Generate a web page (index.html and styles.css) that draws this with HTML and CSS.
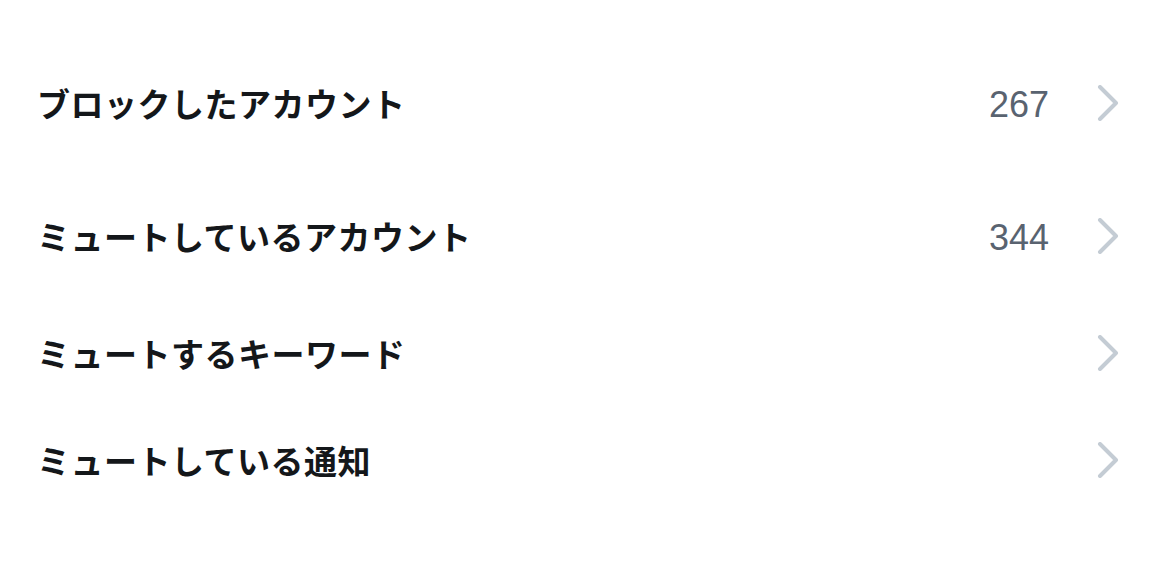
FILE: index.html
```html
<!DOCTYPE html>
<html lang="ja">
<head>
    <meta charset="UTF-8">
    <meta name="viewport" content="width=device-width, initial-scale=1.0">
    <title>ミュートとブロック</title>
    <link rel="stylesheet" href="styles.css">
</head>
<body>
    <ul class="settings">
        <li class="row row-blocked">
            <span class="label">ブロックしたアカウント</span>
            <span class="count">267</span>
            <svg class="chevron" viewBox="0 0 22 36"><polyline points="3,2 19,18 3,34"/></svg>
        </li>
        <li class="row row-muted">
            <span class="label">ミュートしているアカウント</span>
            <span class="count">344</span>
            <svg class="chevron" viewBox="0 0 22 36"><polyline points="3,2 19,18 3,34"/></svg>
        </li>
        <li class="row row-words">
            <span class="label">ミュートするキーワード</span>
            <svg class="chevron" viewBox="0 0 22 36"><polyline points="3,2 19,18 3,34"/></svg>
        </li>
        <li class="row">
            <span class="label">ミュートしている通知</span>
            <svg class="chevron" viewBox="0 0 22 36"><polyline points="3,2 19,18 3,34"/></svg>
        </li>
    </ul>
</body>
</html>
```

FILE: styles.css
```css
body {
    margin: 0;
    background-color: #fff;
    font-family: "Noto Sans CJK JP", "Noto Sans", sans-serif;
    color: #14171a;
}
.settings {
    list-style: none;
    margin: 0;
    padding: 73px 50px 0 37px;
}
.row {
    display: flex;
    align-items: center;
    height: 60px;
}
.row-blocked {
    margin-bottom: 73px;
}
.row-muted {
    margin-bottom: 57px;
}
.row-words {
    margin-bottom: 47px;
}
.label {
    flex: 1;
    font-size: 33px;
    font-weight: 700;
    letter-spacing: 0.5px;
}
.count {
    font-family: "Liberation Sans", Arial, sans-serif;
    font-size: 36px;
    color: #596370;
    margin-right: 48px;
    padding-top: 4px;
}
.chevron {
    width: 22px;
    height: 36px;
    fill: none;
    stroke: #c4ccd4;
    stroke-width: 4;
    stroke-linecap: round;
    stroke-linejoin: round;
}
```
